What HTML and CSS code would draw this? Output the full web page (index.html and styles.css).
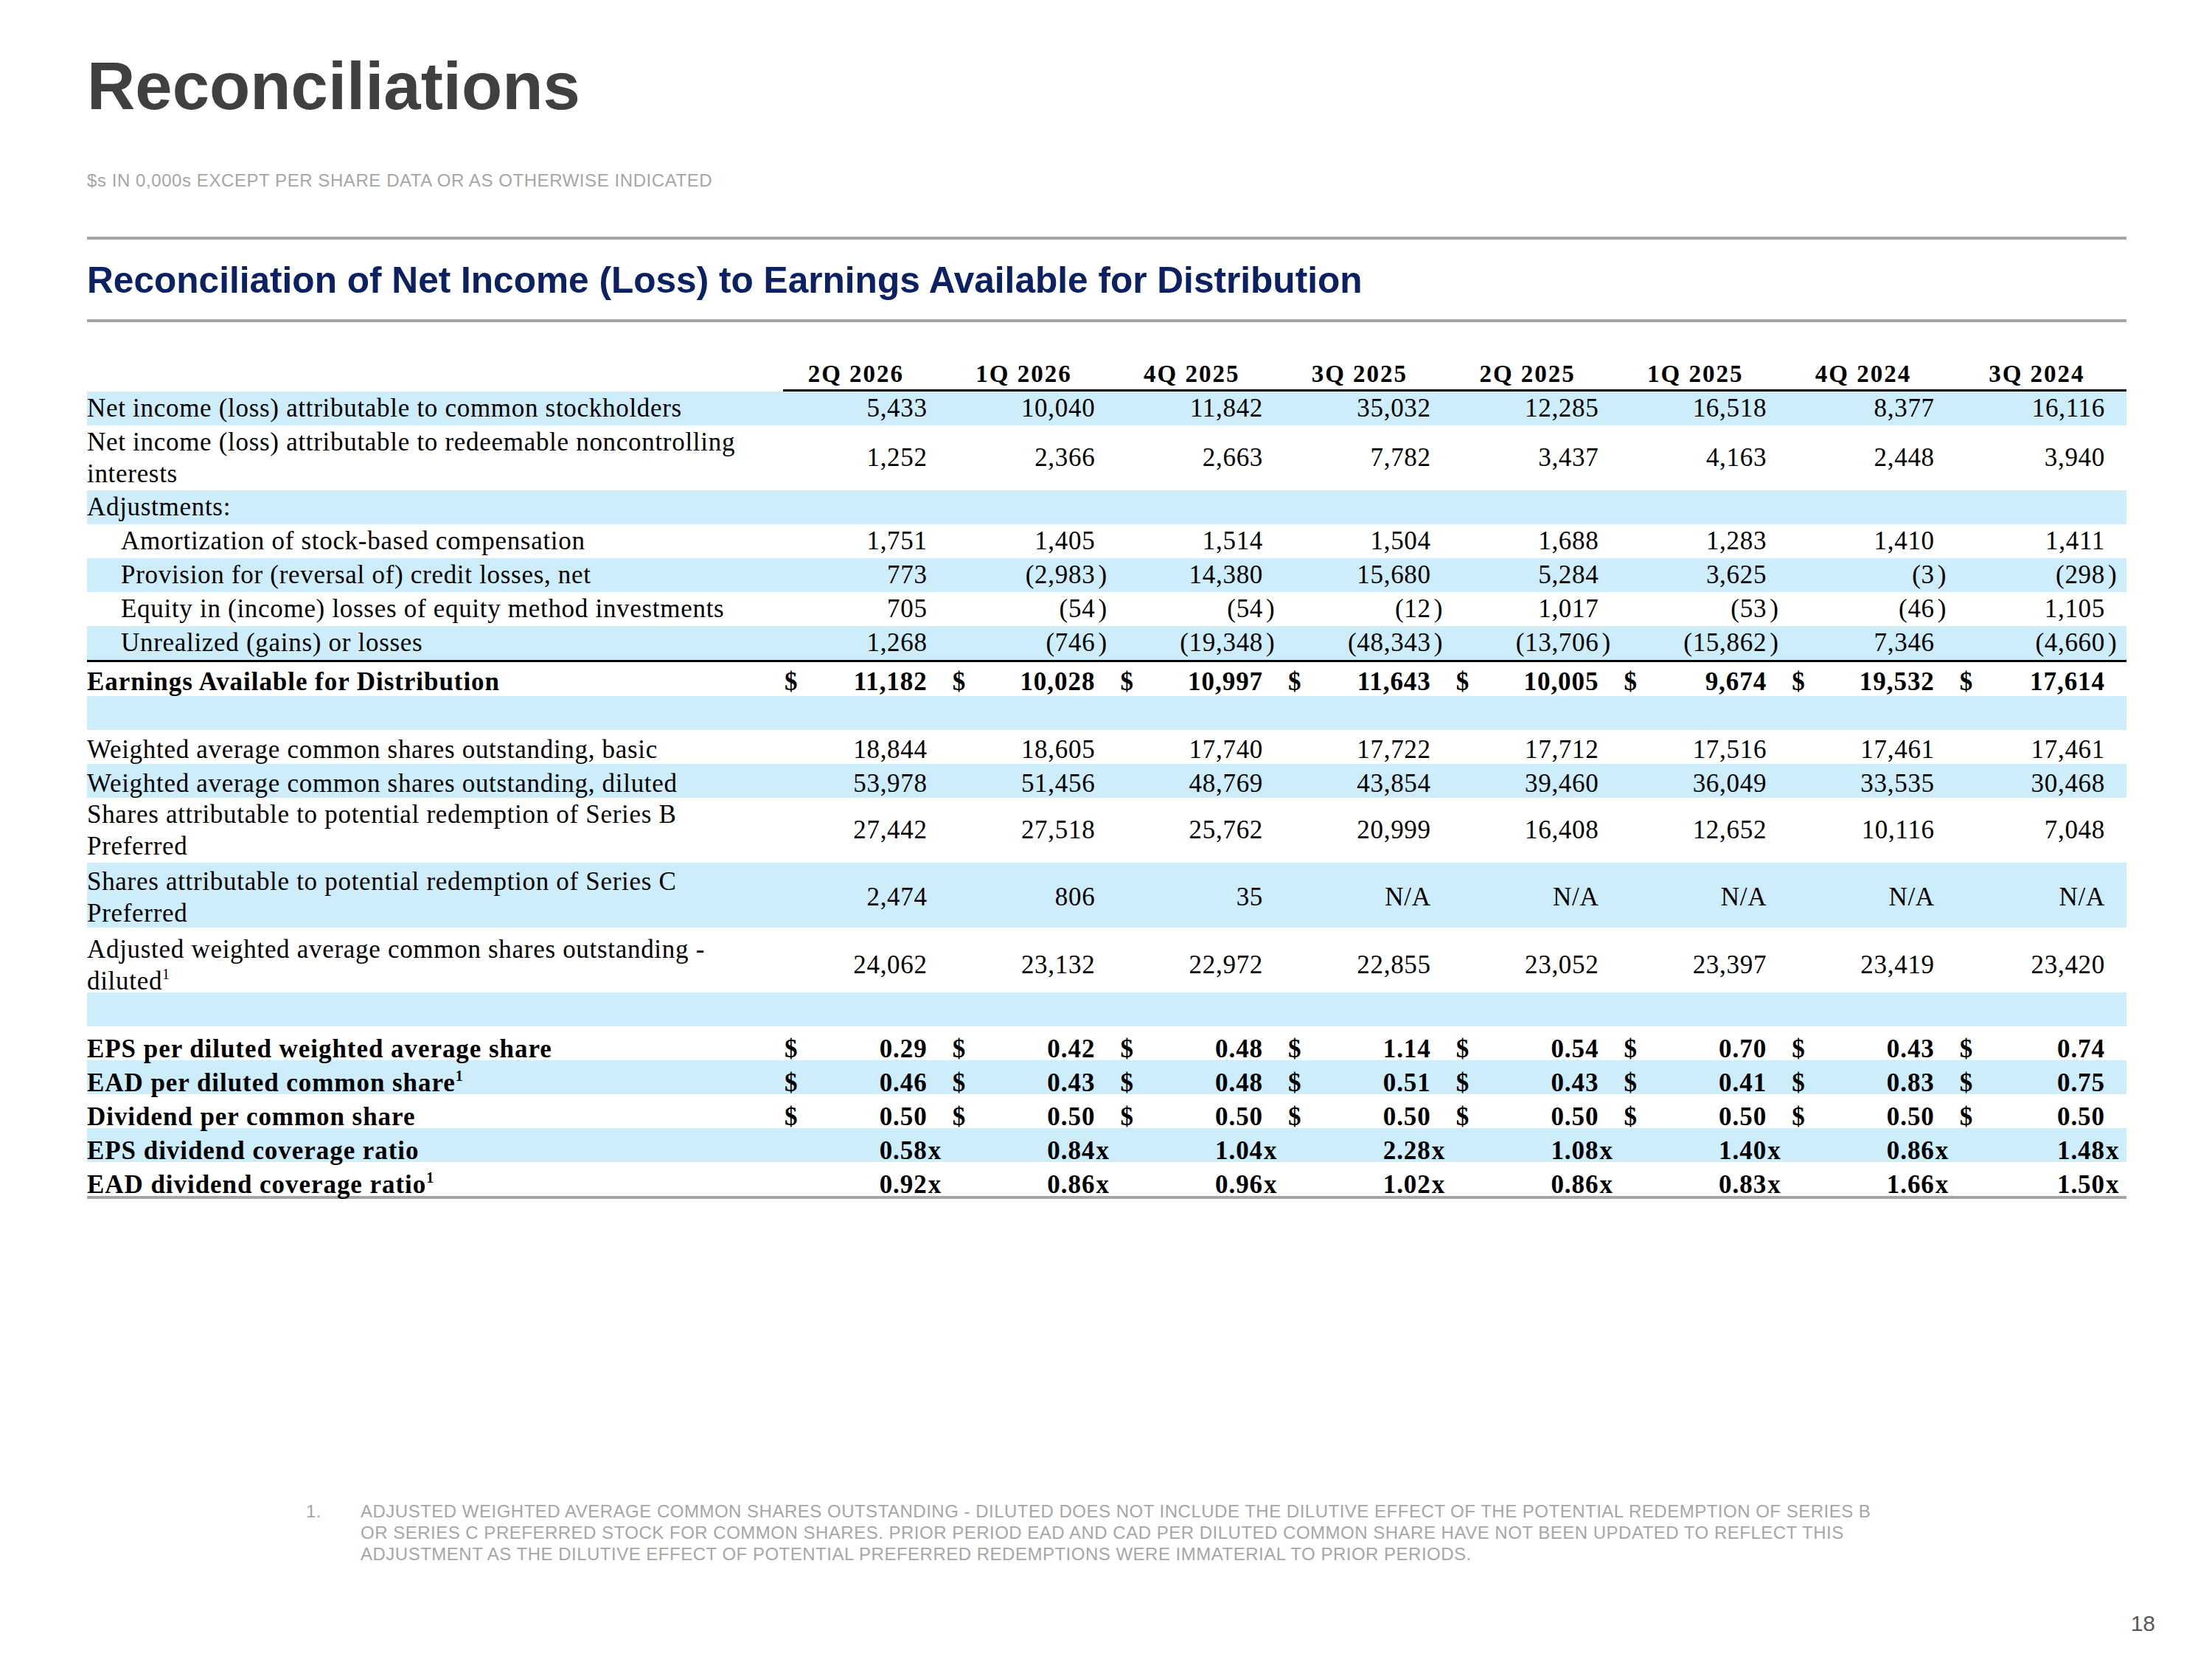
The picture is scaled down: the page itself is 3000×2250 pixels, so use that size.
FILE: index.html
```html
<!DOCTYPE html>
<html lang="en">
<head>
<meta charset="utf-8">
<title>Reconciliations</title>
<link rel="stylesheet" href="styles.css">
</head>
<body>
<div class="page">
  <h1 class="title">Reconciliations</h1>
  <div class="subtitle">$s IN 0,000s EXCEPT PER SHARE DATA OR AS OTHERWISE INDICATED</div>
  <div class="rule"></div>
  <h2 class="heading">Reconciliation of Net Income (Loss) to Earnings Available for Distribution</h2>
  <div class="rule rule2"></div>

  <div class="tbl">
    <div class="row head">
      <div class="lbl"></div>
      <div class="hc first">2Q 2026</div>
      <div class="hc">1Q 2026</div>
      <div class="hc">4Q 2025</div>
      <div class="hc">3Q 2025</div>
      <div class="hc">2Q 2025</div>
      <div class="hc">1Q 2025</div>
      <div class="hc">4Q 2024</div>
      <div class="hc">3Q 2024</div>
    </div>

    <div class="row band">
      <div class="lbl">Net income (loss) attributable to common stockholders</div>
      <div class="c"><span class="n">5,433</span><span class="s"></span></div>
      <div class="c"><span class="n">10,040</span><span class="s"></span></div>
      <div class="c"><span class="n">11,842</span><span class="s"></span></div>
      <div class="c"><span class="n">35,032</span><span class="s"></span></div>
      <div class="c"><span class="n">12,285</span><span class="s"></span></div>
      <div class="c"><span class="n">16,518</span><span class="s"></span></div>
      <div class="c"><span class="n">8,377</span><span class="s"></span></div>
      <div class="c"><span class="n">16,116</span><span class="s"></span></div>
    </div>

    <div class="row tall">
      <div class="lbl">Net income (loss) attributable to redeemable noncontrolling<br>interests</div>
      <div class="c"><span class="n">1,252</span><span class="s"></span></div>
      <div class="c"><span class="n">2,366</span><span class="s"></span></div>
      <div class="c"><span class="n">2,663</span><span class="s"></span></div>
      <div class="c"><span class="n">7,782</span><span class="s"></span></div>
      <div class="c"><span class="n">3,437</span><span class="s"></span></div>
      <div class="c"><span class="n">4,163</span><span class="s"></span></div>
      <div class="c"><span class="n">2,448</span><span class="s"></span></div>
      <div class="c"><span class="n">3,940</span><span class="s"></span></div>
    </div>

    <div class="row band">
      <div class="lbl">Adjustments:</div>
    </div>

    <div class="row">
      <div class="lbl ind">Amortization of stock-based compensation</div>
      <div class="c"><span class="n">1,751</span><span class="s"></span></div>
      <div class="c"><span class="n">1,405</span><span class="s"></span></div>
      <div class="c"><span class="n">1,514</span><span class="s"></span></div>
      <div class="c"><span class="n">1,504</span><span class="s"></span></div>
      <div class="c"><span class="n">1,688</span><span class="s"></span></div>
      <div class="c"><span class="n">1,283</span><span class="s"></span></div>
      <div class="c"><span class="n">1,410</span><span class="s"></span></div>
      <div class="c"><span class="n">1,411</span><span class="s"></span></div>
    </div>

    <div class="row band">
      <div class="lbl ind">Provision for (reversal of) credit losses, net</div>
      <div class="c"><span class="n">773</span><span class="s"></span></div>
      <div class="c"><span class="n">(2,983</span><span class="s">)</span></div>
      <div class="c"><span class="n">14,380</span><span class="s"></span></div>
      <div class="c"><span class="n">15,680</span><span class="s"></span></div>
      <div class="c"><span class="n">5,284</span><span class="s"></span></div>
      <div class="c"><span class="n">3,625</span><span class="s"></span></div>
      <div class="c"><span class="n">(3</span><span class="s">)</span></div>
      <div class="c"><span class="n">(298</span><span class="s">)</span></div>
    </div>

    <div class="row">
      <div class="lbl ind">Equity in (income) losses of equity method investments</div>
      <div class="c"><span class="n">705</span><span class="s"></span></div>
      <div class="c"><span class="n">(54</span><span class="s">)</span></div>
      <div class="c"><span class="n">(54</span><span class="s">)</span></div>
      <div class="c"><span class="n">(12</span><span class="s">)</span></div>
      <div class="c"><span class="n">1,017</span><span class="s"></span></div>
      <div class="c"><span class="n">(53</span><span class="s">)</span></div>
      <div class="c"><span class="n">(46</span><span class="s">)</span></div>
      <div class="c"><span class="n">1,105</span><span class="s"></span></div>
    </div>

    <div class="row band subtotal">
      <div class="lbl ind">Unrealized (gains) or losses</div>
      <div class="c"><span class="n">1,268</span><span class="s"></span></div>
      <div class="c"><span class="n">(746</span><span class="s">)</span></div>
      <div class="c"><span class="n">(19,348</span><span class="s">)</span></div>
      <div class="c"><span class="n">(48,343</span><span class="s">)</span></div>
      <div class="c"><span class="n">(13,706</span><span class="s">)</span></div>
      <div class="c"><span class="n">(15,862</span><span class="s">)</span></div>
      <div class="c"><span class="n">7,346</span><span class="s"></span></div>
      <div class="c"><span class="n">(4,660</span><span class="s">)</span></div>
    </div>

    <div class="row b low1">
      <div class="lbl">Earnings Available for Distribution</div>
      <div class="c"><span class="cur">$</span><span class="n">11,182</span><span class="s"></span></div>
      <div class="c"><span class="cur">$</span><span class="n">10,028</span><span class="s"></span></div>
      <div class="c"><span class="cur">$</span><span class="n">10,997</span><span class="s"></span></div>
      <div class="c"><span class="cur">$</span><span class="n">11,643</span><span class="s"></span></div>
      <div class="c"><span class="cur">$</span><span class="n">10,005</span><span class="s"></span></div>
      <div class="c"><span class="cur">$</span><span class="n">9,674</span><span class="s"></span></div>
      <div class="c"><span class="cur">$</span><span class="n">19,532</span><span class="s"></span></div>
      <div class="c"><span class="cur">$</span><span class="n">17,614</span><span class="s"></span></div>
    </div>

    <div class="row band"><div class="lbl"></div></div>

    <div class="row low1">
      <div class="lbl">Weighted average common shares outstanding, basic</div>
      <div class="c"><span class="n">18,844</span><span class="s"></span></div>
      <div class="c"><span class="n">18,605</span><span class="s"></span></div>
      <div class="c"><span class="n">17,740</span><span class="s"></span></div>
      <div class="c"><span class="n">17,722</span><span class="s"></span></div>
      <div class="c"><span class="n">17,712</span><span class="s"></span></div>
      <div class="c"><span class="n">17,516</span><span class="s"></span></div>
      <div class="c"><span class="n">17,461</span><span class="s"></span></div>
      <div class="c"><span class="n">17,461</span><span class="s"></span></div>
    </div>

    <div class="row band low1">
      <div class="lbl">Weighted average common shares outstanding, diluted</div>
      <div class="c"><span class="n">53,978</span><span class="s"></span></div>
      <div class="c"><span class="n">51,456</span><span class="s"></span></div>
      <div class="c"><span class="n">48,769</span><span class="s"></span></div>
      <div class="c"><span class="n">43,854</span><span class="s"></span></div>
      <div class="c"><span class="n">39,460</span><span class="s"></span></div>
      <div class="c"><span class="n">36,049</span><span class="s"></span></div>
      <div class="c"><span class="n">33,535</span><span class="s"></span></div>
      <div class="c"><span class="n">30,468</span><span class="s"></span></div>
    </div>

    <div class="row tall">
      <div class="lbl">Shares attributable to potential redemption of Series B<br>Preferred</div>
      <div class="c"><span class="n">27,442</span><span class="s"></span></div>
      <div class="c"><span class="n">27,518</span><span class="s"></span></div>
      <div class="c"><span class="n">25,762</span><span class="s"></span></div>
      <div class="c"><span class="n">20,999</span><span class="s"></span></div>
      <div class="c"><span class="n">16,408</span><span class="s"></span></div>
      <div class="c"><span class="n">12,652</span><span class="s"></span></div>
      <div class="c"><span class="n">10,116</span><span class="s"></span></div>
      <div class="c"><span class="n">7,048</span><span class="s"></span></div>
    </div>

    <div class="row tall band low1">
      <div class="lbl">Shares attributable to potential redemption of Series C<br>Preferred</div>
      <div class="c"><span class="n">2,474</span><span class="s"></span></div>
      <div class="c"><span class="n">806</span><span class="s"></span></div>
      <div class="c"><span class="n">35</span><span class="s"></span></div>
      <div class="c"><span class="n">N/A</span><span class="s"></span></div>
      <div class="c"><span class="n">N/A</span><span class="s"></span></div>
      <div class="c"><span class="n">N/A</span><span class="s"></span></div>
      <div class="c"><span class="n">N/A</span><span class="s"></span></div>
      <div class="c"><span class="n">N/A</span><span class="s"></span></div>
    </div>

    <div class="row tall low2">
      <div class="lbl">Adjusted weighted average common shares outstanding -<br>diluted<sup class="fn">1</sup></div>
      <div class="c"><span class="n">24,062</span><span class="s"></span></div>
      <div class="c"><span class="n">23,132</span><span class="s"></span></div>
      <div class="c"><span class="n">22,972</span><span class="s"></span></div>
      <div class="c"><span class="n">22,855</span><span class="s"></span></div>
      <div class="c"><span class="n">23,052</span><span class="s"></span></div>
      <div class="c"><span class="n">23,397</span><span class="s"></span></div>
      <div class="c"><span class="n">23,419</span><span class="s"></span></div>
      <div class="c"><span class="n">23,420</span><span class="s"></span></div>
    </div>

    <div class="row band"><div class="lbl"></div></div>

    <div class="row b low2">
      <div class="lbl">EPS per diluted weighted average share</div>
      <div class="c"><span class="cur">$</span><span class="n">0.29</span><span class="s"></span></div>
      <div class="c"><span class="cur">$</span><span class="n">0.42</span><span class="s"></span></div>
      <div class="c"><span class="cur">$</span><span class="n">0.48</span><span class="s"></span></div>
      <div class="c"><span class="cur">$</span><span class="n">1.14</span><span class="s"></span></div>
      <div class="c"><span class="cur">$</span><span class="n">0.54</span><span class="s"></span></div>
      <div class="c"><span class="cur">$</span><span class="n">0.70</span><span class="s"></span></div>
      <div class="c"><span class="cur">$</span><span class="n">0.43</span><span class="s"></span></div>
      <div class="c"><span class="cur">$</span><span class="n">0.74</span><span class="s"></span></div>
    </div>

    <div class="row b band low2">
      <div class="lbl">EAD per diluted common share<sup class="fn">1</sup></div>
      <div class="c"><span class="cur">$</span><span class="n">0.46</span><span class="s"></span></div>
      <div class="c"><span class="cur">$</span><span class="n">0.43</span><span class="s"></span></div>
      <div class="c"><span class="cur">$</span><span class="n">0.48</span><span class="s"></span></div>
      <div class="c"><span class="cur">$</span><span class="n">0.51</span><span class="s"></span></div>
      <div class="c"><span class="cur">$</span><span class="n">0.43</span><span class="s"></span></div>
      <div class="c"><span class="cur">$</span><span class="n">0.41</span><span class="s"></span></div>
      <div class="c"><span class="cur">$</span><span class="n">0.83</span><span class="s"></span></div>
      <div class="c"><span class="cur">$</span><span class="n">0.75</span><span class="s"></span></div>
    </div>

    <div class="row b low2">
      <div class="lbl">Dividend per common share</div>
      <div class="c"><span class="cur">$</span><span class="n">0.50</span><span class="s"></span></div>
      <div class="c"><span class="cur">$</span><span class="n">0.50</span><span class="s"></span></div>
      <div class="c"><span class="cur">$</span><span class="n">0.50</span><span class="s"></span></div>
      <div class="c"><span class="cur">$</span><span class="n">0.50</span><span class="s"></span></div>
      <div class="c"><span class="cur">$</span><span class="n">0.50</span><span class="s"></span></div>
      <div class="c"><span class="cur">$</span><span class="n">0.50</span><span class="s"></span></div>
      <div class="c"><span class="cur">$</span><span class="n">0.50</span><span class="s"></span></div>
      <div class="c"><span class="cur">$</span><span class="n">0.50</span><span class="s"></span></div>
    </div>

    <div class="row b band low2">
      <div class="lbl">EPS dividend coverage ratio</div>
      <div class="c"><span class="n">0.58</span><span class="s x">x</span></div>
      <div class="c"><span class="n">0.84</span><span class="s x">x</span></div>
      <div class="c"><span class="n">1.04</span><span class="s x">x</span></div>
      <div class="c"><span class="n">2.28</span><span class="s x">x</span></div>
      <div class="c"><span class="n">1.08</span><span class="s x">x</span></div>
      <div class="c"><span class="n">1.40</span><span class="s x">x</span></div>
      <div class="c"><span class="n">0.86</span><span class="s x">x</span></div>
      <div class="c"><span class="n">1.48</span><span class="s x">x</span></div>
    </div>

    <div class="row b last low2">
      <div class="lbl">EAD dividend coverage ratio<sup class="fn">1</sup></div>
      <div class="c"><span class="n">0.92</span><span class="s x">x</span></div>
      <div class="c"><span class="n">0.86</span><span class="s x">x</span></div>
      <div class="c"><span class="n">0.96</span><span class="s x">x</span></div>
      <div class="c"><span class="n">1.02</span><span class="s x">x</span></div>
      <div class="c"><span class="n">0.86</span><span class="s x">x</span></div>
      <div class="c"><span class="n">0.83</span><span class="s x">x</span></div>
      <div class="c"><span class="n">1.66</span><span class="s x">x</span></div>
      <div class="c"><span class="n">1.50</span><span class="s x">x</span></div>
    </div>
  </div>

  <div class="footnote">
    <span class="fnum">1.</span>
    <p class="ftext">ADJUSTED WEIGHTED AVERAGE COMMON SHARES OUTSTANDING - DILUTED DOES NOT INCLUDE THE DILUTIVE EFFECT OF THE POTENTIAL REDEMPTION OF SERIES B<br>OR SERIES C PREFERRED STOCK FOR COMMON SHARES. PRIOR PERIOD EAD AND CAD PER DILUTED COMMON SHARE HAVE NOT BEEN UPDATED TO REFLECT THIS<br>ADJUSTMENT AS THE DILUTIVE EFFECT OF POTENTIAL PREFERRED REDEMPTIONS WERE IMMATERIAL TO PRIOR PERIODS.</p>
  </div>

  <div class="pagenum">18</div>
</div>
</body>
</html>
```

FILE: styles.css
```css
html, body {
  margin: 0;
  padding: 0;
  background: #ffffff;
}

.page {
  width: 3000px;
  height: 2250px;
  box-sizing: border-box;
  padding: 0 116px 0 118px;
  font-family: "Liberation Sans", Arial, sans-serif;
  overflow: hidden;
}

.title {
  margin: 72px 0 0 0;
  font-size: 90.5px;
  line-height: 90px;
  font-weight: bold;
  color: #404040;
}

.subtitle {
  margin-top: 69px;
  font-size: 24px;
  line-height: 28px;
  letter-spacing: 0.57px;
  color: #a6a6a6;
}

.rule {
  margin-top: 62px;
  height: 4px;
  background: #a6a6a6;
}

.heading {
  margin: 29px 0 0 0;
  font-size: 49.6px;
  line-height: 52px;
  font-weight: bold;
  color: #0b2162;
}

.rule2 {
  margin-top: 27px;
}

/* table */
.tbl {
  font-family: "Liberation Serif", "Times New Roman", serif;
  font-size: 35px;
  letter-spacing: 0.7px;
  color: #000;
}

.row {
  display: grid;
  grid-template-columns: 929px repeat(7, 227.7px) 1fr;
  height: 46px;
  line-height: 46px;
  align-items: center;
  box-sizing: border-box;
}

.row.tall {
  height: 88px;
}

.row.tall .lbl {
  line-height: 43px;
}

.row.low1 {
  padding-top: 4px;
}

.row.low2 {
  padding-top: 8px;
}

.band {
  background: #cdedfa;
}

.b {
  font-weight: bold;
  letter-spacing: 0.95px;
}

.subtotal {
  border-bottom: 3px solid #000;
  box-sizing: content-box;
}

.last {
  border-bottom: 4px solid #a6a6a6;
  box-sizing: content-box;
  height: 38px;
}

.lbl {
  white-space: nowrap;
}

.lbl.ind {
  padding-left: 46px;
}

.fn {
  font-size: 20px;
  line-height: 0;
  vertical-align: 14px;
  letter-spacing: 0;
}

.row.head {
  height: 94px;
  align-items: end;
}

.hc {
  font-weight: bold;
  font-size: 33px;
  letter-spacing: 2px;
  line-height: 40px;
  padding-bottom: 1px;
  text-align: center;
  border-bottom: 3px solid #000;
}

.hc.first {
  margin-left: 15px;
  padding-right: 15px;
}

.c {
  display: flex;
  align-items: baseline;
  padding-left: 17px;
}

.cur {
  display: inline-block;
}

.n {
  flex: 1;
  text-align: right;
}

.s {
  width: 13px;
  padding-left: 4px;
  text-align: left;
}

.s.x {
  padding-left: 1px;
  width: 16px;
}

.c:last-child .s {
  width: 25px;
}

.c:last-child .s.x {
  width: 28px;
}

/* footnote */
.footnote {
  margin: 409px 0 0 297px;
  display: flex;
  font-size: 24px;
  line-height: 29px;
  letter-spacing: 0.5px;
  color: #a6a6a6;
}

.fnum {
  width: 74px;
  flex: none;
}

.ftext {
  margin: 0;
  white-space: nowrap;
}

.pagenum {
  margin: 63px -39px 0 0;
  text-align: right;
  font-size: 30px;
  line-height: 34px;
  color: #595959;
}
```
